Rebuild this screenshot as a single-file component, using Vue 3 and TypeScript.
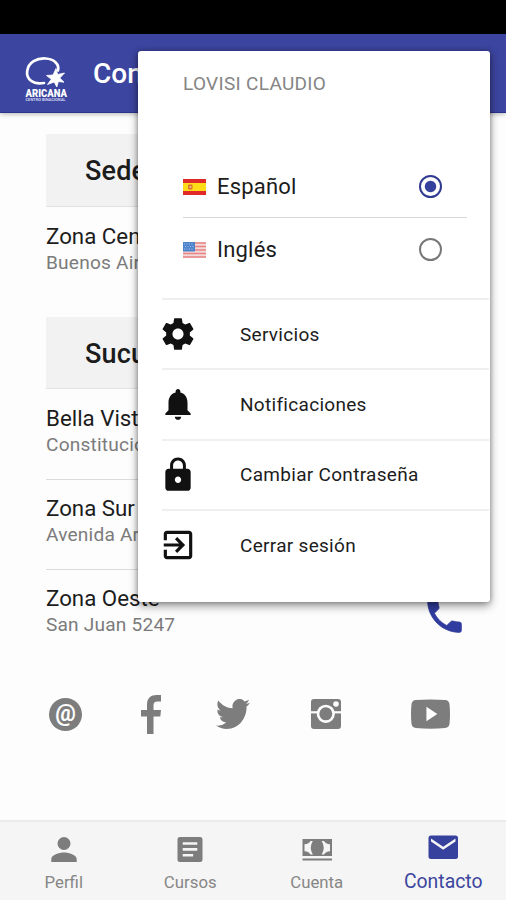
<script setup lang="ts">
import { ref } from 'vue'

interface Place { name: string; address: string }
interface Section { title: string; places: Place[] }

const sections: Section[] = [
  { title: 'Sede', places: [{ name: 'Zona Centro', address: 'Buenos Aires' }] },
  {
    title: 'Sucursales',
    places: [
      { name: 'Bella Vista', address: 'Constitución' },
      { name: 'Zona Sur', address: 'Avenida Arijón' },
      { name: 'Zona Oeste', address: 'San Juan 5247' },
    ],
  },
]

const language = ref<'es' | 'en'>('es')

const actions: { label: string; path: string }[] = [
  { label: 'Servicios', path: 'M19.43 12.98c.04-.32.07-.64.07-.98s-.03-.66-.07-.98l2.11-1.65c.19-.15.24-.42.12-.64l-2-3.46c-.12-.22-.39-.3-.61-.22l-2.49 1c-.52-.4-1.08-.73-1.69-.98l-.38-2.65C14.46 2.18 14.25 2 14 2h-4c-.25 0-.46.18-.49.42l-.38 2.65c-.61.25-1.17.59-1.69.98l-2.49-1c-.23-.09-.49 0-.61.22l-2 3.46c-.13.22-.07.49.12.64l2.11 1.65c-.04.32-.07.65-.07.98s.03.66.07.98l-2.11 1.65c-.19.15-.24.42-.12.64l2 3.46c.12.22.39.3.61.22l2.49-1c.52.4 1.08.73 1.69.98l.38 2.65c.03.24.24.42.49.42h4c.25 0 .46-.18.49-.42l.38-2.65c.61-.25 1.17-.59 1.69-.98l2.49 1c.23.09.49 0 .61-.22l2-3.46c.12-.22.07-.49-.12-.64l-2.11-1.65zM12 15.5c-1.93 0-3.5-1.57-3.5-3.5s1.57-3.5 3.5-3.5 3.5 1.57 3.5 3.5-1.57 3.5-3.5 3.5z' },
  { label: 'Notificaciones', path: 'M12 22c1.1 0 2-.9 2-2h-4c0 1.1.9 2 2 2zm6-6v-5c0-3.07-1.64-5.64-4.5-6.32V4c0-.83-.67-1.5-1.5-1.5s-1.5.67-1.5 1.5v.68C7.63 5.36 6 7.92 6 11v5l-2 2v1h16v-1l-2-2z' },
  { label: 'Cambiar Contraseña', path: 'M18 8h-1V6c0-2.76-2.24-5-5-5S7 3.24 7 6v2H6c-1.1 0-2 .9-2 2v10c0 1.1.9 2 2 2h12c1.1 0 2-.9 2-2V10c0-1.1-.9-2-2-2zm-6 9c-1.1 0-2-.9-2-2s.9-2 2-2 2 .9 2 2-.9 2-2 2zm3.1-9H8.9V6c0-1.71 1.39-3.1 3.1-3.1 1.71 0 3.1 1.39 3.1 3.1v2z' },
  { label: 'Cerrar sesión', path: 'M10.09 15.59L11.5 17l5-5-5-5-1.41 1.41L12.67 11H3v2h9.67l-2.58 2.59zM19 3H5c-1.11 0-2 .9-2 2v4h2V5h14v14H5v-4H3v4c0 1.1.89 2 2 2h14c1.1 0 2-.9 2-2V5c0-1.1-.9-2-2-2z' },
]
</script>

<template>
  <div class="screen">
    <div class="status" />
    <header class="bar">
      <svg class="logo" viewBox="0 0 46 50">
        <path d="M22 30C11 32 4 26 5.200 18 6.500 9 15 5 23.500 5.500c9 .5 14 6 12.500 12" fill="none" stroke="#fff" stroke-width="2.700" stroke-linecap="round" />
        <path d="M34 15.500l1.600 6 6.900-1.500-4.700 5 4.200 4.200-5.600-.7-1.600 5.500-2.600-5-6.700 2.500 3.800-5.200-4.800-3.800 6.500-.5z" fill="#fff" stroke="#fff" stroke-width=".8" />
        <text x="3.500" y="44" class="brand" textLength="41.500" lengthAdjust="spacingAndGlyphs">ARICANA</text>
        <text x="3.500" y="48" class="tagline" textLength="40" lengthAdjust="spacingAndGlyphs">CENTRO BINACIONAL</text>
      </svg>
      <h1>Contacto</h1>
    </header>

    <main class="content">
      <section v-for="s in sections" :key="s.title" class="section">
        <h2>{{ s.title }}</h2>
        <div v-for="p in s.places" :key="p.name" class="place">
          <div>
            <div class="name">{{ p.name }}</div>
            <div class="address">{{ p.address }}</div>
          </div>
          <svg class="call" viewBox="0 0 24 24"><path d="M6.62 10.79c1.44 2.83 3.76 5.14 6.59 6.59l2.2-2.2c.27-.27.67-.36 1.02-.24 1.12.37 2.33.57 3.57.57.55 0 1 .45 1 1V20c0 .55-.45 1-1 1-9.39 0-17-7.61-17-17 0-.55.45-1 1-1h3.5c.55 0 1 .45 1 1 0 1.25.2 2.45.57 3.57.11.35.03.74-.25 1.02l-2.2 2.2z" /></svg>
        </div>
      </section>

      <div class="social">
        <span class="at">@</span>
        <svg class="fb" viewBox="0 0 20 39"><path d="M6 39V21.500H0V15h6V9.500C6 3 10 0 15.500 0H20v6.500h-3.500c-2.700 0-4 1.200-4 3.500v5H20l-.7 6.500h-6.800V39z" /></svg>
        <svg class="tw" viewBox="0 2.200 24 19.600" preserveAspectRatio="none"><path d="M23.953 4.57a10 10 0 01-2.825.775 4.958 4.958 0 002.163-2.723c-.951.555-2.005.959-3.127 1.184a4.92 4.92 0 00-8.384 4.482C7.69 8.095 4.067 6.13 1.64 3.162a4.822 4.822 0 00-.666 2.475c0 1.71.87 3.213 2.188 4.096a4.904 4.904 0 01-2.228-.616v.06a4.923 4.923 0 003.946 4.827 4.996 4.996 0 01-2.212.085 4.936 4.936 0 004.604 3.417 9.867 9.867 0 01-6.102 2.105c-.39 0-.779-.023-1.17-.067a13.995 13.995 0 007.557 2.209c9.053 0 13.998-7.496 13.998-13.985 0-.21 0-.42-.015-.63A9.935 9.935 0 0024 4.59z" /></svg>
        <svg class="ig" viewBox="0 0 30 30">
          <rect width="30" height="30" rx="3" />
          <path d="M0 13.300h30" stroke="#fdfdfd" stroke-width="2.200" />
          <circle cx="14.800" cy="14.800" r="7.800" stroke="#fdfdfd" stroke-width="2.600" />
          <circle cx="25" cy="5" r="2.800" fill="#fdfdfd" />
        </svg>
        <svg class="yt" viewBox="0 0 40 30"><path d="M5 .7Q20-.7 35 .7 39 1 39.500 5q1 10 0 20-.5 4-4.500 4.300-15 1.400-30 0Q1 29 .5 25q-1-10 0-20Q1 1 5 .7zM15.800 7.500v15L27 15z" /></svg>
      </div>
    </main>

    <nav class="tabs">
      <a class="tab">
        <svg viewBox="0 0 38 38"><path d="M19 19a6.500 6.500 0 1 0 0-13 6.500 6.500 0 0 0 0 13zM6.300 31v-3c0-4 7.700-6.500 12.700-6.500S31.700 24 31.700 28v3z" /></svg>
        <span>Perfil</span>
      </a>
      <a class="tab">
        <svg viewBox="0 0 38 38"><path fill-rule="evenodd" d="M9 6h20q2.500 0 2.500 2.500v20Q31.500 31 29 31H9q-2.500 0-2.500-2.500v-20Q6.500 6 9 6zm2.700 5.200v2.600h14.600v-2.600zm0 5.900v2.600h14.600v-2.600zm0 5.800v2.700h10.500v-2.700z" /></svg>
        <span>Cursos</span>
      </a>
      <a class="tab">
        <svg viewBox="0 0 38 38">
          <path d="M4.500 8h29.500v17H4.500zM4.500 27.500h29.500v2H4.500z" />
          <path d="M12.500 10Q11 13 6.500 13.200v7Q11 20.500 12.500 23.500h2.300q-4-7 0-13.500zM26 10q1.500 3 6 3.200v7q-4.500.3-6 3.300h-2.300q4-7 0-13.500z" fill="#f5f5f5" />
        </svg>
        <span>Cuenta</span>
      </a>
      <a class="tab active">
        <svg viewBox="0 0 38 38"><path fill-rule="evenodd" d="M7 4.500h24.500q2.500 0 2.500 2.500v18.500Q34 28 31.500 28H7q-2.500 0-2.500-2.500V7Q4.500 4.500 7 4.500zM7 7.500v3l12.200 8.300 12.300-8.300v-3l-12.300 8.200z" /></svg>
        <span>Contacto</span>
      </a>
    </nav>

    <aside class="menu">
      <div class="user">LOVISI CLAUDIO</div>
      <div class="languages">
        <label class="language" @click="language = 'es'">
          <svg class="flag" viewBox="0 0 23 16">
            <path fill="#e02a2a" d="M0 0h23v16H0z" /><path fill="#ffdc18" d="M0 4h23v8H0z" />
            <rect x="5" y="5.500" width="4.500" height="5" rx="1" fill="#d9722a" /><path d="M6.500 7h1.800v2H6.500z" fill="#e8b9a0" />
          </svg>
          <span class="language-name">Español</span>
          <span class="radio" :class="{ checked: language === 'es' }" />
        </label>
        <label class="language" @click="language = 'en'">
          <svg class="flag" viewBox="0 0 23 16">
            <path fill="#f3d9d9" d="M0 0h23v16H0z" />
            <path stroke="#e88484" stroke-width="1.500" d="M0 1h23M0 4.500h23M0 8h23M0 11.500h23M0 15h23" />
            <path fill="#4d83ca" d="M0 0h12v9.500H0z" />
            <path stroke="#a9c7ec" stroke-width="1" stroke-dasharray="1 1.500" d="M1 2h10M2 4.500h9M1 7h10" />
          </svg>
          <span class="language-name">Inglés</span>
          <span class="radio" :class="{ checked: language === 'en' }" />
        </label>
      </div>
      <ul class="actions">
        <li v-for="a in actions" :key="a.label">
          <svg viewBox="0 0 24 24"><path :d="a.path" /></svg>
          <span>{{ a.label }}</span>
        </li>
      </ul>
    </aside>
  </div>
</template>

<style>
body { margin: 0; }
</style>

<style scoped>
.screen {
  position: relative;
  display: flex;
  flex-direction: column;
  width: 506px;
  height: 900px;
  overflow: hidden;
  background: #fdfdfd;
  color: #1c1c1c;
  font-family: Roboto, "Liberation Sans", sans-serif;
}
.status { flex: none; height: 34px; background: #000; }
.bar {
  flex: none;
  display: flex;
  align-items: center;
  box-sizing: border-box;
  height: 79px;
  padding-left: 22px;
  background: #3c459f;
  border-bottom: 1px solid #2b338c;
  box-shadow: 0 1px 5px rgba(0, 0, 0, 0.3);
}
.logo { width: 46px; height: 50px; margin-top: 10px; overflow: visible; }
.brand { font: 900 11.5px Roboto, sans-serif; fill: #fff; }
.tagline { font: 700 3px Roboto, sans-serif; fill: #cfd3f2; }
h1 { margin: 2px 0 0 25px; color: #fff; font-size: 28px; font-weight: 500; line-height: 36px; }
.content { flex: 1; min-height: 0; padding: 21px 46px 0; }
.section { margin-bottom: 21px; }
.section:first-child { margin-bottom: 20px; }
h2 {
  box-sizing: border-box;
  height: 72px;
  margin: 0;
  padding-left: 39px;
  background: #f2f2f2;
  border-bottom: 1px solid #e2e2e2;
  font-size: 27px;
  font-weight: 500;
  line-height: 75px;
  letter-spacing: 0.2px;
}
.section:first-child h2 { height: 73px; }
.place {
  display: flex;
  justify-content: space-between;
  box-sizing: border-box;
  height: 90px;
  padding-top: 14px;
}
.place + .place { border-top: 1px solid #dcdcdc; padding-top: 13px; }
.name { font-size: 22.3px; line-height: 30px; }
.address { font-size: 19.1px; line-height: 23px; letter-spacing: 0.2px; color: #7b7b7b; }
.call {
  width: 45px;
  height: 45px;
  margin: 10px -7px 0 0;
  fill: #303c9e;
  stroke: #303c9e;
  stroke-width: 0.4px;
}
.social {
  display: flex;
  align-items: center;
  height: 40px;
  margin-top: 35px;
  padding-left: 3px;
  fill: #7d7d7d;
}
.at {
  width: 33px;
  height: 33px;
  border-radius: 50%;
  background: #7d7d7d;
  color: #fdfdfd;
  font-size: 23px;
  font-weight: 700;
  line-height: 31px;
  text-align: center;
}
.fb { width: 20px; height: 39px; margin-left: 59px; }
.tw { width: 34px; height: 30px; margin-left: 55px; }
.ig { width: 30px; height: 30px; margin-left: 61px; }
.yt { width: 39px; height: 30px; margin-left: 70px; fill-rule: evenodd; }
.tabs {
  flex: none;
  display: flex;
  box-sizing: border-box;
  height: 80px;
  border-top: 2px solid #ebebeb;
  background: #f5f5f5;
}
.tab {
  flex: 1;
  display: flex;
  flex-direction: column;
  align-items: center;
  padding: 9px 0 0 1px;
  color: #868686;
  fill: #7d7d7d;
  font-size: 16.8px;
  line-height: 26px;
}
.tab svg { width: 38px; height: 38px; }
.tab.active { color: #3c459f; fill: #36419e; font-size: 19.4px; }
.menu {
  position: absolute;
  top: 51px;
  left: 138px;
  box-sizing: border-box;
  width: 352px;
  height: 551px;
  padding-top: 20px;
  border-radius: 3px;
  background: #fff;
  box-shadow: 0 4px 10px rgba(0, 0, 0, 0.4), 0 0 5px rgba(0, 0, 0, 0.3);
}
.user { padding-left: 45px; color: #858585; font-size: 19px; line-height: 26px; letter-spacing: 0.3px; }
.languages { margin: 57px 23px 0 45px; }
.language { display: flex; align-items: center; box-sizing: border-box; height: 63px; padding-top: 2px; }
.language + .language { height: 64px; padding-top: 0; border-top: 1px solid #d8d8d8; }
.flag { width: 23px; height: 16px; }
.language-name { flex: 1; margin-left: 11px; font-size: 22px; line-height: 28px; letter-spacing: 0.2px; }
.radio {
  box-sizing: border-box;
  width: 23px;
  height: 23px;
  margin-right: 25px;
  border: 2.5px solid #777;
  border-radius: 50%;
}
.radio.checked { border-color: #303a91; background: radial-gradient(circle, #36419e 5.2px, #fff 6.2px); }
.actions { margin: 17px 1px 0 24px; padding: 0; list-style: none; }
.actions li {
  display: flex;
  align-items: center;
  box-sizing: border-box;
  height: 70.3px;
  border-top: 2px solid #efefef;
}
.actions svg { width: 38px; height: 38px; margin-left: -3px; fill: #111; }
.actions span { margin: 1px 0 0 43px; font-size: 19px; line-height: 26px; letter-spacing: 0.3px; }
</style>
